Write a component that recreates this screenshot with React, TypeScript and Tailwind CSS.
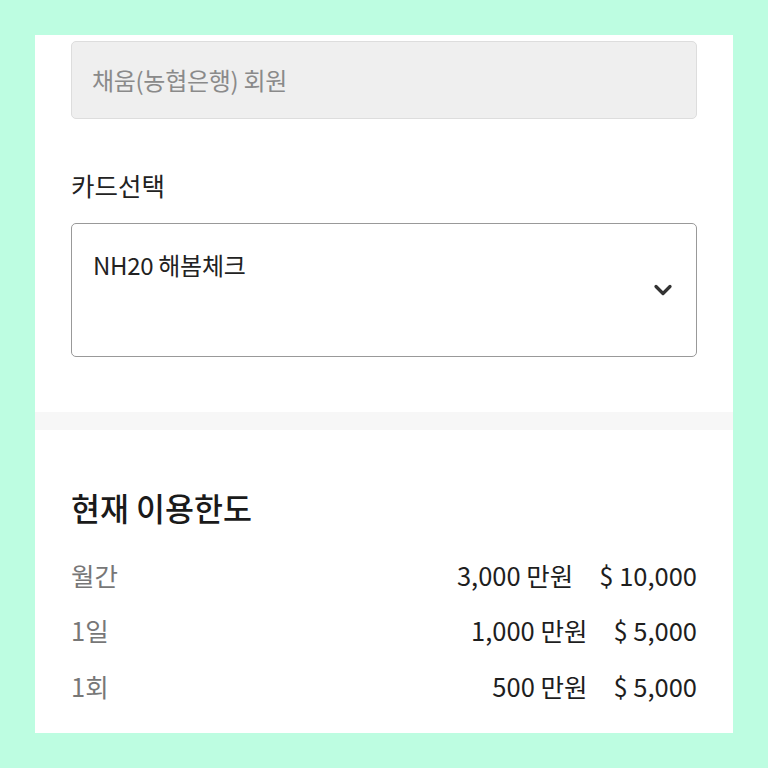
import { ChevronDown } from 'lucide-react';

const limits = [
  { label: '월간', won: '3,000 만원', usd: '$ 10,000' },
  { label: '1일', won: '1,000 만원', usd: '$ 5,000' },
  { label: '1회', won: '500 만원', usd: '$ 5,000' },
];

export default function App() {
  return (
    <div
      className="w-[768px] h-[768px] bg-[#bdfde1] p-[35px]"
      style={{ fontFamily: '"Noto Sans CJK KR", "Noto Sans", sans-serif' }}
    >
      <div className="w-[698px] h-[698px] bg-white overflow-hidden flex flex-col">
        <div className="px-[36px] pt-[6px]">
          <div className="h-[78px] rounded-[5px] border border-[#dddddd] bg-[#efefef] flex items-center px-[20px] text-[24px] tracking-[-0.3px] text-[#8a8a8a]">
            채움(농협은행) 회원
          </div>

          <div className="mt-[48px] text-[25.5px] leading-[36px] text-[#222222]">카드선택</div>

          <div className="mt-[20px] h-[134px] rounded-[5px] border border-[#999999] relative px-[21px] pt-[23px]">
            <div className="text-[24px] leading-[36px] tracking-[-0.3px] text-[#222222]">NH20 해봄체크</div>
            <ChevronDown
              className="absolute right-[19px] top-[52px] w-[28px] h-[28px] text-[#333333]"
              strokeWidth={2.8}
            />
          </div>
        </div>

        <div className="mt-[55px] h-[18px] bg-[#f7f7f7]" />

        <div className="px-[36px] pt-[57px]">
          <h2 className="text-[31.5px] leading-[40px] font-medium text-[#1a1a1a]">현재 이용한도</h2>
          <div className="mt-[20px] flex flex-col">
            {limits.map((row) => (
              <div key={row.label} className="h-[55.5px] flex items-center justify-between text-[25.5px]">
                <span className="text-[#777777]">{row.label}</span>
                <div className="flex items-center gap-[26px] text-[#1e1e1e]">
                  <span>{row.won}</span>
                  <span>{row.usd}</span>
                </div>
              </div>
            ))}
          </div>
        </div>
      </div>
    </div>
  );
}
